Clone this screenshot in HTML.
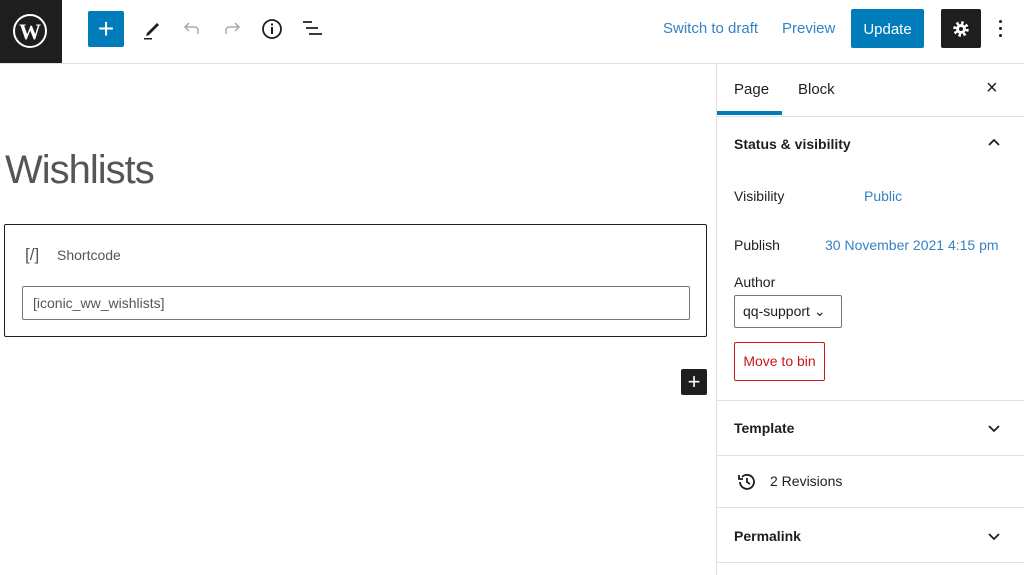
<!DOCTYPE html>
<html><head><style>
*{box-sizing:border-box;margin:0;padding:0}
body{width:1024px;height:575px;overflow:hidden;background:#fff;font-family:"Liberation Sans",sans-serif;color:#1e1e1e;position:relative}
.a{position:absolute}
.lnk{color:#3582c4}
</style></head><body>
<div class="a" style="left:0;top:0;width:62px;height:63px;background:#1e1e1e"></div>
<svg class="a" style="left:12px;top:13px" width="36" height="36" viewBox="0 0 36 36"><circle cx="18" cy="18" r="16" fill="none" stroke="#fff" stroke-width="2"/><text x="18" y="26" text-anchor="middle" font-family="Liberation Serif" font-size="22" font-weight="bold" fill="#fff">W</text></svg>
<div class="a" style="left:0;top:63px;width:1024px;height:1px;background:#e0e0e0"></div>
<div class="a" style="left:88px;top:11px;width:36px;height:36px;background:#007cba;border-radius:2px;color:#fff;font-size:28px;line-height:36px;text-align:center">+</div>
<svg class="a" style="left:140px;top:17px" width="24" height="24" viewBox="0 0 24 24"><path d="M7 16l2 2 10-10-2-2z M6 19l1-3 2 2z" fill="#1e1e1e"/><rect x="4" y="21" width="8" height="1.5" fill="#1e1e1e"/></svg>
<svg class="a" style="left:180px;top:17px" width="24" height="24" viewBox="0 0 24 24"><path d="M18 17v-4a3 3 0 0 0-3-3H6M9 6l-4 4 4 4" fill="none" stroke="#aaa" stroke-width="1.5"/></svg>
<svg class="a" style="left:220px;top:17px" width="24" height="24" viewBox="0 0 24 24"><path d="M6 17v-4a3 3 0 0 1 3-3h9M15 6l4 4-4 4" fill="none" stroke="#aaa" stroke-width="1.5"/></svg>
<svg class="a" style="left:260px;top:17px" width="24" height="24" viewBox="0 0 24 24"><circle cx="12" cy="12" r="9" fill="none" stroke="#1e1e1e" stroke-width="1.8"/><rect x="11" y="10" width="2" height="7" fill="#1e1e1e"/><rect x="11" y="6.5" width="2" height="2" fill="#1e1e1e"/></svg>
<svg class="a" style="left:300px;top:17px" width="24" height="24" viewBox="0 0 24 24"><path d="M3 5h9M6 11h12M9 17h13" stroke="#1e1e1e" stroke-width="1.8"/></svg>
<div class="a lnk" style="left:663px;top:20px;font-size:15px">Switch to draft</div>
<div class="a lnk" style="left:782px;top:20px;font-size:15px">Preview</div>
<div class="a" style="left:851px;top:9px;width:73px;height:39px;background:#007cba;border-radius:2px;color:#fff;font-size:15px;line-height:41px;text-align:center">Update</div>
<div class="a" style="left:941px;top:9px;width:40px;height:39px;background:#1e1e1e;border-radius:2px"></div>
<svg class="a" style="left:951px;top:19px" width="20" height="20" viewBox="0 0 20 20"><circle cx="10" cy="10" r="6" fill="none" stroke="#fff" stroke-width="3.5" stroke-dasharray="2.4 2.3"/><circle cx="10" cy="10" r="5" fill="#fff"/><circle cx="10" cy="10" r="2" fill="#1e1e1e"/></svg>
<div class="a" style="left:999px;top:20px;width:3px;height:3px;background:#1e1e1e;border-radius:50%;box-shadow:0 7px 0 #1e1e1e,0 14px 0 #1e1e1e"></div>
<div class="a" style="left:716px;top:63px;width:1px;height:512px;background:#e0e0e0"></div>
<div class="a" style="left:734px;top:81px;font-size:15px">Page</div>
<div class="a" style="left:798px;top:81px;font-size:15px">Block</div>
<div class="a" style="left:717px;top:111px;width:65px;height:4px;background:#007cba"></div>
<div class="a" style="left:986px;top:77px;font-size:20px">×</div>
<div class="a" style="left:717px;top:116px;width:307px;height:1px;background:#e0e0e0"></div>
<div class="a" style="left:734px;top:136px;font-size:14px;font-weight:bold">Status &amp; visibility</div>
<svg class="a" style="left:986px;top:136px" width="16" height="12"><path d="M3 9l5-5 5 5" fill="none" stroke="#1e1e1e" stroke-width="1.8"/></svg>
<div class="a" style="left:734px;top:188px;font-size:14px">Visibility</div>
<div class="a lnk" style="left:864px;top:188px;font-size:14px">Public</div>
<div class="a" style="left:734px;top:237px;font-size:14px">Publish</div>
<div class="a lnk" style="left:825px;top:237px;font-size:14px">30 November 2021 4:15 pm</div>
<div class="a" style="left:734px;top:274px;font-size:14px">Author</div>
<div class="a" style="left:734px;top:295px;width:108px;height:33px;border:1px solid #757575;border-radius:2px;font-size:14px;line-height:31px;padding-left:8px">qq-support ⌄</div>
<div class="a" style="left:734px;top:342px;width:91px;height:39px;border:1px solid #cc1818;border-radius:2px;color:#cc1818;font-size:14px;line-height:37px;text-align:center">Move to bin</div>
<div class="a" style="left:717px;top:400px;width:307px;height:1px;background:#e0e0e0"></div>
<div class="a" style="left:734px;top:420px;font-size:14px;font-weight:bold">Template</div>
<svg class="a" style="left:986px;top:423px" width="16" height="12"><path d="M3 3l5 5 5-5" fill="none" stroke="#1e1e1e" stroke-width="1.8"/></svg>
<div class="a" style="left:717px;top:455px;width:307px;height:1px;background:#e0e0e0"></div>
<svg class="a" style="left:736px;top:471px" width="22" height="22" viewBox="0 0 22 22"><path d="M4 11a7 7 0 1 0 2-5" fill="none" stroke="#1e1e1e" stroke-width="1.8"/><path d="M3 4v4h4" fill="none" stroke="#1e1e1e" stroke-width="1.8"/><path d="M11 7v4l3 2" fill="none" stroke="#1e1e1e" stroke-width="1.8"/></svg>
<div class="a" style="left:770px;top:473px;font-size:14px">2 Revisions</div>
<div class="a" style="left:717px;top:507px;width:307px;height:1px;background:#e0e0e0"></div>
<div class="a" style="left:734px;top:528px;font-size:14px;font-weight:bold">Permalink</div>
<svg class="a" style="left:986px;top:531px" width="16" height="12"><path d="M3 3l5 5 5-5" fill="none" stroke="#1e1e1e" stroke-width="1.8"/></svg>
<div class="a" style="left:717px;top:562px;width:307px;height:1px;background:#e0e0e0"></div>
<div class="a" style="left:5px;top:148px;font-size:40px;color:#555;letter-spacing:-1px">Wishlists</div>
<div class="a" style="left:4px;top:224px;width:703px;height:113px;border:1.5px solid #1e1e1e;border-radius:2px"></div>
<div class="a" style="left:25px;top:245px;font-size:17px;color:#555">[/]</div>
<div class="a" style="left:57px;top:247px;font-size:14px;color:#555">Shortcode</div>
<div class="a" style="left:22px;top:286px;width:668px;height:34px;border:1px solid #757575;border-radius:2px;font-size:14px;line-height:32px;padding-left:10px;color:#555">[iconic_ww_wishlists]</div>
<div class="a" style="left:681px;top:369px;width:26px;height:26px;background:#1e1e1e;border-radius:2px;color:#fff;font-size:22px;line-height:26px;text-align:center">+</div>
</body></html>
